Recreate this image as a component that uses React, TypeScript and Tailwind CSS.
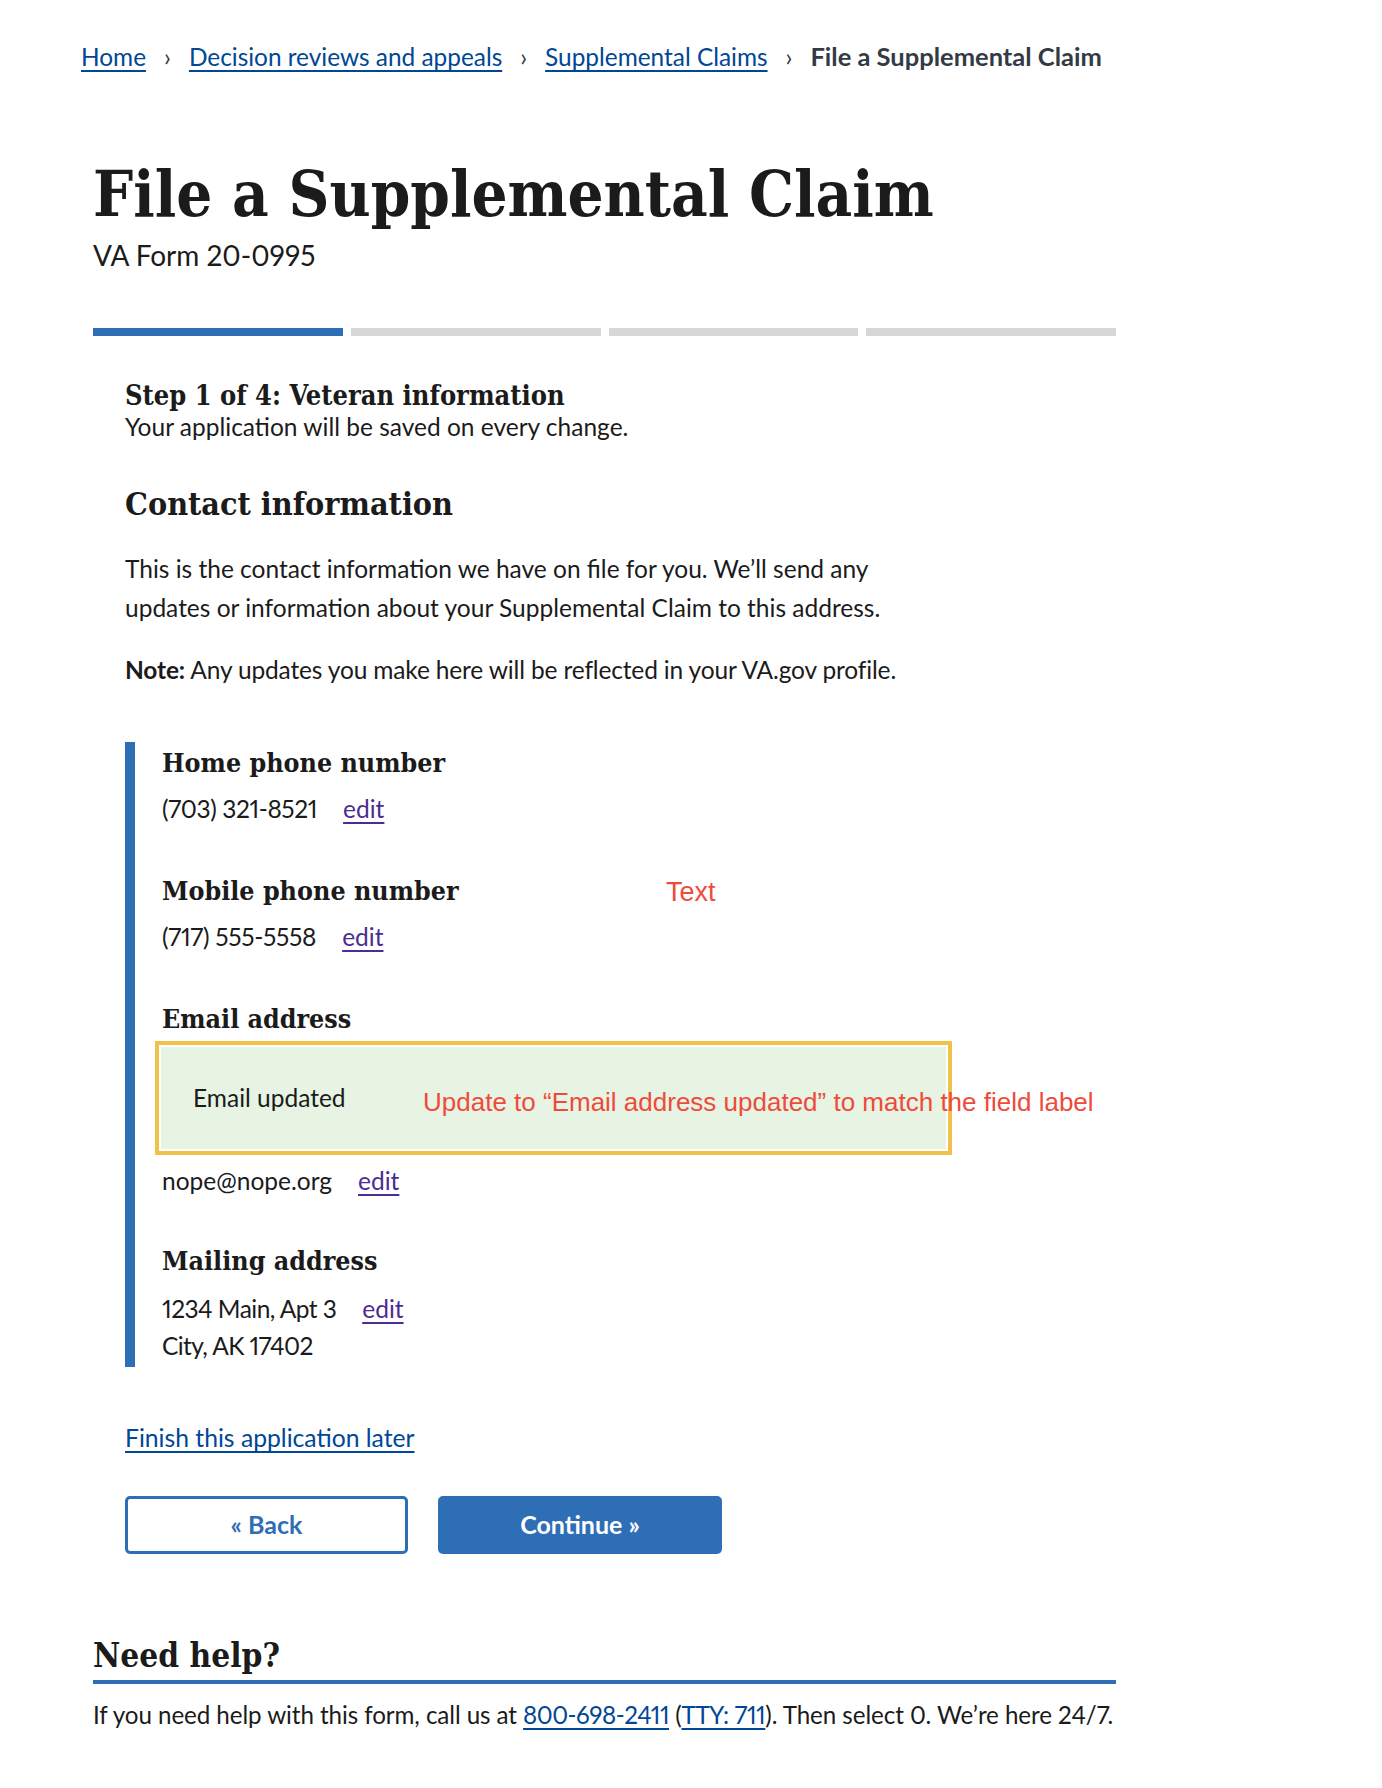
import React from "react";

const sans = { fontFamily: "Lato, 'Noto Sans', sans-serif" };

function Field({
  label,
  children,
  note,
}: {
  label: string;
  children: React.ReactNode;
  note?: string;
}) {
  return (
    <div className="relative">
      <h4 className="font-serif-va text-[26.6px] leading-[32px] font-bold text-[#1b1b1b]">{label}</h4>
      {note && (
        <span className="annot absolute left-[504px] top-[1px] text-[27px] leading-[32px] text-[#ee4b3a]">
          {note}
        </span>
      )}
      {children}
    </div>
  );
}

function Edit() {
  return (
    <a href="#" className="ml-[26px] text-[#4c2c92] underline decoration-2 underline-offset-[4px]">
      edit
    </a>
  );
}

export default function App() {
  return (
    <div className="min-h-[1788px] bg-white text-[#1b1b1b] proportional-nums" style={sans}>
      <style>{`
        .font-serif-va { font-family: "DejaVu Serif Condensed", "DejaVu Serif", serif; font-stretch: condensed; }
        .annot { font-family: "Liberation Sans", Arial, sans-serif; }
      `}</style>

      {/* Breadcrumb */}
      <nav className="whitespace-nowrap pl-[81px] pt-[41px] text-[24.4px] leading-[30px]">
        <a href="#" className="text-[#004795] underline decoration-2 underline-offset-[4px]">Home</a>
        <span className="mx-[18px] text-[#323a45]">›</span>
        <a href="#" className="text-[#004795] underline decoration-2 underline-offset-[4px]">Decision reviews and appeals</a>
        <span className="mx-[18px] text-[#323a45]">›</span>
        <a href="#" className="text-[#004795] underline decoration-2 underline-offset-[4px]">Supplemental Claims</a>
        <span className="mx-[18px] text-[#323a45]">›</span>
        <span className="text-[25.5px] font-bold text-[#323a45]">File a Supplemental Claim</span>
      </nav>

      <main className="ml-[93px] w-[1023px]">
        <h1 className="font-serif-va mt-[86px] text-[63px] leading-[72px] font-bold">File a Supplemental Claim</h1>
        <p className="mt-[7px] text-[28px] leading-[36px]">VA Form 20-0995</p>

        {/* Progress */}
        <div className="mt-[55px] grid grid-cols-4 gap-[8px]">
          <div className="h-[8px] bg-[#2e6eb5]" />
          <div className="h-[8px] bg-[#d6d7d9]" />
          <div className="h-[8px] bg-[#d6d7d9]" />
          <div className="h-[8px] bg-[#d6d7d9]" />
        </div>

        <div className="pl-[32px] text-[24.5px]">
          <h2 className="font-serif-va mt-[44px] text-[27px] leading-[32px] font-bold">Step 1 of 4: Veteran information</h2>
          <p className="leading-[30px]">Your application will be saved on every change.</p>

          <h3 className="font-serif-va mt-[42px] text-[32px] leading-[40px] font-bold">Contact information</h3>
          <p className="mt-[25px] leading-[39px]">
            This is the contact information we have on file for you. We’ll send any
            <br />
            updates or information about your Supplemental Claim to this address.
          </p>
          <p className="mt-[23px] leading-[39px] tracking-[-0.15px]">
            <strong>Note:</strong> Any updates you make here will be reflected in your VA.gov profile.
          </p>

          {/* Contact block */}
          <div className="mt-[53px] border-l-[10px] border-[#2e6eb5] pl-[27px] pt-[5px] pb-[3px]">
            <Field label="Home phone number">
              <p className="mt-[15px] leading-[30px]">
                <span className="tracking-[-0.4px]">(703) 321-8521</span>
                <Edit />
              </p>
            </Field>

            <div className="mt-[51px]">
              <Field label="Mobile phone number" note="Text">
                <p className="mt-[15px] leading-[30px]">
                  <span className="tracking-[-0.3px]">(717) 555-5558</span>
                  <Edit />
                </p>
              </Field>
            </div>

            <div className="mt-[51px]">
              <Field label="Email address">
                <div className="relative -ml-[7px] mt-[6px] w-[797px] border-[4px] border-[#f0c24a] p-[2px]">
                  <div className="flex h-[102px] items-center bg-[#e7f3e3] pl-[32px] leading-[30px]">
                    Email updated
                  </div>
                  <span className="annot absolute left-[264px] top-[41px] whitespace-nowrap text-[26px] leading-[32px] text-[#ee4b3a]">
                    Update to “Email address updated” to match the field label
                  </span>
                </div>
                <p className="mt-[11px] leading-[30px]">
                  nope@nope.org
                  <Edit />
                </p>
              </Field>
            </div>

            <div className="mt-[49px]">
              <Field label="Mailing address">
                <div className="mt-[13px] leading-[37px]">
                  <p>
                    <span className="tracking-[-0.55px]">1234 Main, Apt 3</span>
                    <Edit />
                  </p>
                  <p className="tracking-[-0.6px]">City, AK 17402</p>
                </div>
              </Field>
            </div>
          </div>

          <a href="#" className="mt-[56px] block w-fit text-[24.7px] leading-[30px] text-[#004795] underline decoration-2 underline-offset-[4px]">
            Finish this application later
          </a>

          <div className="mt-[43px] flex gap-[30px]">
            <button className="h-[58px] w-[283px] rounded-[5px] border-[3px] border-[#2e6eb5] bg-white text-[25px] font-bold text-[#2e6eb5]">
              « Back
            </button>
            <button className="h-[58px] w-[284px] rounded-[5px] bg-[#2e6eb5] text-[25px] font-bold text-white">
              Continue »
            </button>
          </div>
        </div>

        {/* Need help */}
        <h2 className="font-serif-va mt-[82px] text-[33.2px] leading-[40px] font-bold">Need help?</h2>
        <div className="mt-[4px] h-[4px] bg-[#2e6eb5]" />
        <p className="mt-[16px] whitespace-nowrap text-[24.2px] leading-[30px] tracking-[-0.08px]">
          If you need help with this form, call us at{" "}
          <a href="#" className="tracking-[-0.5px] text-[#004795] underline decoration-2 underline-offset-[4px]">800-698-2411</a> (
          <a href="#" className="tracking-[-0.4px] text-[#004795] underline decoration-2 underline-offset-[4px]">TTY: 711</a>). Then select 0. We’re here 24/7.
        </p>
      </main>
    </div>
  );
}
